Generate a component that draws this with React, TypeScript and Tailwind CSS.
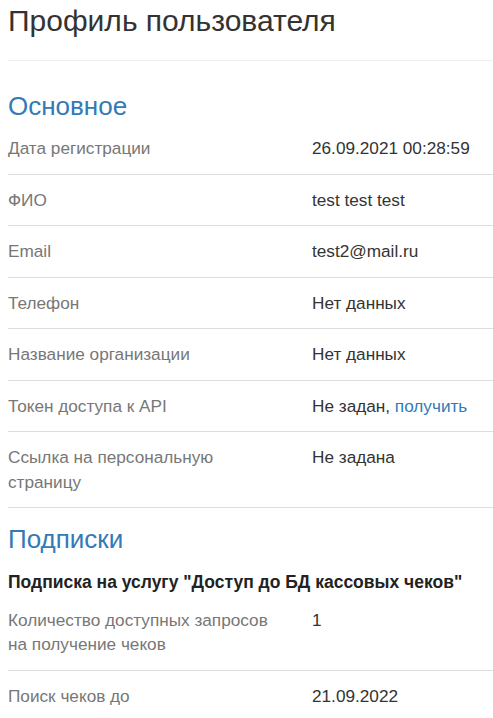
const font = { fontFamily: '"Liberation Sans", Arial, sans-serif' }

type Row = { label: string; value: React.ReactNode }

const basic: Row[] = [
  { label: 'Дата регистрации', value: '26.09.2021 00:28:59' },
  { label: 'ФИО', value: 'test test test' },
  { label: 'Email', value: 'test2@mail.ru' },
  { label: 'Телефон', value: 'Нет данных' },
  { label: 'Название организации', value: 'Нет данных' },
  {
    label: 'Токен доступа к API',
    value: (
      <>
        Не задан, <a href="#" className="text-[#337ab7]">получить</a>
      </>
    ),
  },
  { label: 'Ссылка на персональную страницу', value: 'Не задана' },
]

const subscription: Row[] = [
  { label: 'Количество доступных запросов на получение чеков', value: '1' },
  { label: 'Поиск чеков до', value: '21.09.2022' },
]

function InfoRow({ label, value }: Row) {
  return (
    <div className="flex border-b border-[#ddd] py-[13px] text-[17.2px] leading-[24.5px]">
      <div className="w-[304px] shrink-0 pr-6 text-[#777]">{label}</div>
      <div className="text-[#333]">{value}</div>
    </div>
  )
}

export default function App() {
  return (
    <div className="min-h-screen bg-white pl-2" style={font}>
      <div className="border-b border-[#eee] pt-[4px] pb-[23px]">
        <h1 className="text-[30px] leading-[33px] text-[#333]">Профиль пользователя</h1>
      </div>

      <h3 className="mt-[31px] mb-[3px] text-[26px] leading-[28px] text-[#337ab7]">Основное</h3>
      <div>
        {basic.map((row) => (
          <InfoRow key={row.label} {...row} />
        ))}
      </div>

      <h3 className="mt-[17px] text-[26px] leading-[28px] text-[#337ab7]">Подписки</h3>
      <h4 className="mt-[17px] text-[17.5px] leading-[24.5px] font-bold text-[#222]">
        Подписка на услугу "Доступ до БД кассовых чеков"
      </h4>
      <div>
        {subscription.map((row) => (
          <InfoRow key={row.label} {...row} />
        ))}
      </div>
    </div>
  )
}
